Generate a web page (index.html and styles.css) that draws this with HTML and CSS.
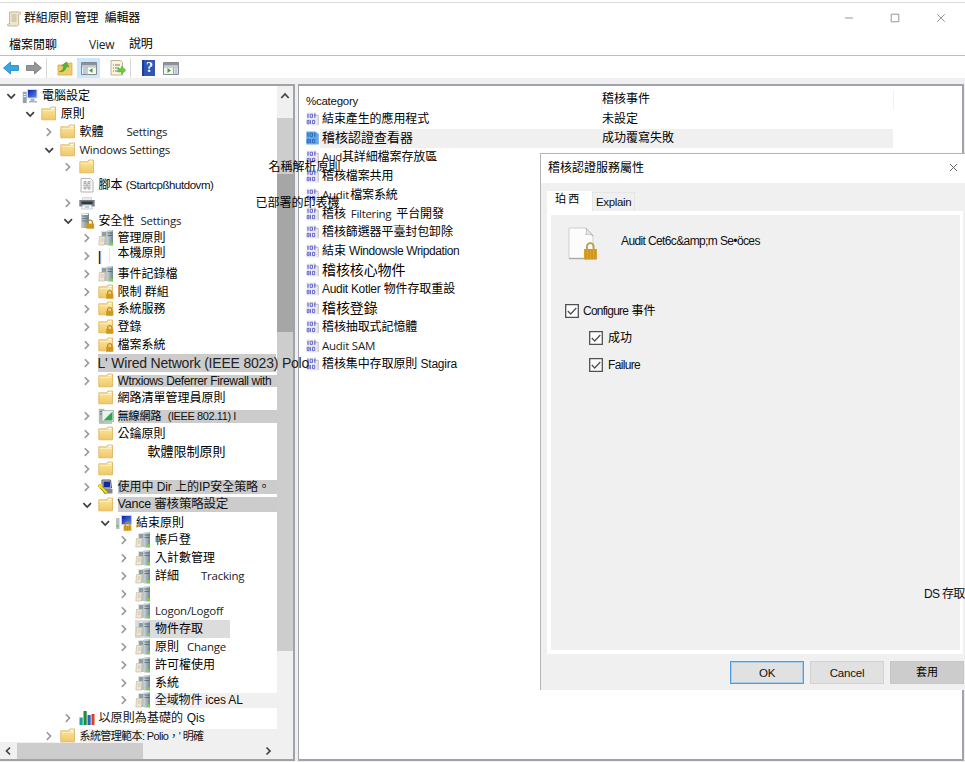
FILE: index.html
```
<!DOCTYPE html>
<html lang="zh-Hant">
<head>
<meta charset="utf-8">
<title>群組原則管理編輯器</title>
<link rel="stylesheet" href="styles.css">
</head>
<body>
<svg class="defs" aria-hidden="true">
  <linearGradient id="gf" x1="0" y1="0" x2="0" y2="1"><stop offset="0" stop-color="#fbe7a4"/><stop offset="1" stop-color="#f0c865"/></linearGradient>
  <linearGradient id="gs" x1="0" y1="0" x2="1" y2="0"><stop offset="0" stop-color="#c9d3d8"/><stop offset="1" stop-color="#71858f"/></linearGradient>
  <linearGradient id="gb" x1="0" y1="0" x2="1" y2="1"><stop offset="0" stop-color="#0a1fb0"/><stop offset="1" stop-color="#5b8cf0"/></linearGradient>
  <symbol id="right" viewBox="0 0 22 16"><path d="M8.800 4.300l3.800 3.800-3.800 3.800" fill="none" stroke="#9a9a9a" stroke-width="1.600"/></symbol>
  <symbol id="down" viewBox="0 0 22 16"><path d="M7.400 6.200l3.800 3.800 3.800-3.800" fill="none" stroke="#3c3c3c" stroke-width="1.700"/></symbol>
  <symbol id="folder" viewBox="0 0 16 16"><path d="M.8 2.800h8l1-1.800h4.700v12.800H.8z" fill="url(#gf)" stroke="#dcb158" stroke-width=".8"/><path d="M10.300 2.500h3" stroke="#fff" stroke-width="1.300"/><path d="M1.500 4.500h12.500" stroke="#fdf0c0" stroke-width=".8"/></symbol>
  <symbol id="lock" viewBox="0 0 8 9"><path d="M2 4.500V3a2 2 0 0 1 4 0v1.500" fill="none" stroke="#b58c30" stroke-width="1.200"/><path d="M.5 4h7v4.800h-7z" fill="#d99f22"/><path d="M2 4.500v4M4 4.500v4M6 4.500v4" stroke="#b37e14" stroke-width=".4"/></symbol>
  <symbol id="flock" viewBox="0 0 16 16"><use href="#folder"/><use href="#lock" x="7.500" y="5.500" width="8.500" height="9.500"/></symbol>
  <symbol id="tower" viewBox="0 0 16 16"><path d="M2 .5h8V15H2z" fill="url(#gs)"/><path d="M3 3h6M3 5.500h6M3 8h6" stroke="#5c7078" stroke-width=".8"/><path d="M3 1.500h6" stroke="#f2f6f8" stroke-width="1"/></symbol>
  <symbol id="security" viewBox="0 0 16 16"><use href="#tower"/><use href="#lock" x="6.500" y="6" width="9.500" height="10"/></symbol>
  <symbol id="server" viewBox="0 0 16 16"><path d="M3.500 1h5.500v14H3.500z" fill="#b9c5ca"/><path d="M9 .3h6V15.500H9z" fill="url(#gs)"/><path d="M4 1.500h4M9.500 1h5" stroke="#e8eef0" stroke-width=".8"/><path d="M4 3h4M4 5h4M9.500 3h5M9.500 5.500h5" stroke="#4f656e" stroke-width=".8"/><path d="M1.500 6.500h5.500l-.6 8.500H.8z" fill="#eee6d2" stroke="#c0b497" stroke-width=".6"/><path d="M2.700 9h3M2.600 11h3" stroke="#b9ad93" stroke-width=".6"/><circle cx="13.500" cy="13.500" r="1.600" fill="#6ede2b"/></symbol>
  <symbol id="pc" viewBox="0 0 16 16"><path d="M5 1h10.500v9.500H5z" fill="#d4d9e4"/><path d="M6 2h8.500v7.500H6z" fill="url(#gb)"/><path d="M8.500 10.500h4v2.500h2.500v1.500H7V13h1.500z" fill="#aeb3bb"/><path d="M.8 3.800h3.900v11.300H.8z" fill="#8fa3b4"/><path d="M1.500 6.500h2.500M1.500 8.500h2.500" stroke="#e3ecf3"/></symbol>
  <symbol id="pclock" viewBox="0 0 16 16"><path d="M5 0h11v10H5z" fill="#c8cdda"/><path d="M6 1h9v8H6z" fill="url(#gb)"/><path d="M0 3h3.500v11H0z" fill="#b9bec0"/><circle cx="1.700" cy="11" r="1" fill="#58c13b"/><use href="#lock" x="7" y="6" width="9" height="10"/></symbol>
  <symbol id="script" viewBox="0 0 16 16"><path d="M2 1.500h9.500L14 4v11H2z" fill="#fafafa" stroke="#b4b4b4"/><path d="M5 4.500h2v2H5zM9 4.500h2v2H9zM5 10h2v2H5zM9 10h2v2H9zM4 8.200h8M8 6.500v4" fill="none" stroke="#a2a2a2" stroke-width=".9"/></symbol>
  <symbol id="printer" viewBox="0 0 16 16"><path d="M3.500 2.500h9V6h-9z" fill="#e8eaec" stroke="#bbb" stroke-width=".5"/><path d="M.3 5h15.400v6.500H.3z" fill="#777e84"/><path d="M2.500 6.500h11v2.500h-11z" fill="#33383c"/><path d="M3.500 10h9l1 4h-11z" fill="#f3f5f6" stroke="#aaa" stroke-width=".5"/><path d="M6 12h4" stroke="#71b4c8"/></symbol>
  <symbol id="blank" viewBox="0 0 16 16"><path d="M1.700 3v13" stroke="#000" stroke-width="1.200"/><path d="M.7 3v13" stroke="#f5b65f" stroke-width=".7"/><path d="M2.700 3v13" stroke="#62b2ef" stroke-width=".7"/><path d="M11.500 0v14" stroke="#dedede" stroke-width=".8"/></symbol>
  <symbol id="wireless" viewBox="0 0 16 16"><path d="M.8.800h5.500v13.500H.8z" fill="#aebbb9"/><path d="M2 3.500h3M2 6h3" stroke="#5d6e6b"/><path d="M4 2.500h11.500v11H4z" fill="#e9f1ea" stroke="#93aaa0" stroke-width=".7"/><path d="M5.500 12.500L14.500 3.500v9z" fill="#35a154"/><path d="M1 15h13" stroke="#7c9188"/></symbol>
  <symbol id="ipsec" viewBox="0 0 16 16"><path d="M4 1h8.500l1 8H4z" fill="#c9ccd2" stroke="#55585e"/><path d="M5.500 2.500H12V8H5.500z" fill="#1527a4"/><path d="M4 10h10.500v4.500H6z" fill="#82868d"/><path d="M.8 6l8 8" stroke="#8a7c00" stroke-width="3.200"/><path d="M1 6l7.800 8M1 8.500l3-3" stroke="#f5e01c" stroke-width="2.200"/></symbol>
  <symbol id="chart" viewBox="0 0 16 16"><path d="M.5 7.500h3.200v7.500H.5z" fill="#12a49b"/><path d="M4.500 1h3.200V15H4.500z" fill="#258b38"/><path d="M8.500 5h3.200v10H8.500z" fill="#2864c4"/><path d="M12.500 4h3v11h-3z" fill="#dd3f20"/></symbol>
  <symbol id="policy" viewBox="0 0 13 14"><path d="M.5.5h8.500l3.500 2.500v10.500H.5z" fill="#e9e9ec"/><path d="M9 .5v3h3.300v9.500" fill="none" stroke="#bdbdc2" stroke-width=".9"/><path d="M2 1.800v4M8.800 1.800v4M4.300 8v4" stroke="#5b5bc9" stroke-width="1.100"/><path d="M4.200 2.200h2.300v3.200H4.200zM1.200 8.400h1.700v3.200H1.200zM6.500 8.400h2.200v3.200H6.500z" fill="none" stroke="#5b5bc9" stroke-width=".9"/></symbol>
  <symbol id="policysel" viewBox="0 0 13 14"><path d="M.3.500h9l3.500 2.500v10.500H.3z" fill="#63a9e4"/><path d="M2 1.800v4M8.800 1.800v4M4.300 8v4" stroke="#2a62ba" stroke-width="1.100"/><path d="M4.200 2.200h2.300v3.200H4.200zM1.200 8.400h1.700v3.200H1.200zM6.500 8.400h2.200v3.200H6.500z" fill="none" stroke="#2a62ba" stroke-width=".9"/></symbol>
</svg>

<header class="titlebar">
  <svg class="app-icon" viewBox="0 0 16 16"><path d="M3.500 1h10.300c1.200 0 1.200 2.500-.3 2.500h-.8V13c0 1.500-1 2-2 2H2.500c-1.500 0-1.500-2 0-2h1z" fill="#efe6cb" stroke="#b5a988" stroke-width=".8"/><path d="M5.500 4h5M5.500 6h5M5.500 8h5M5.500 10h5" stroke="#a89c81" stroke-width=".7"/></svg>
  <h1>群組原則 管理&nbsp; 編輯器</h1>
  <div class="winbtns">
    <svg viewBox="0 0 10 10"><path d="M1 5h8"/></svg>
    <svg viewBox="0 0 10 10"><path d="M1.200 1.200h7.600v7.600H1.200z"/></svg>
    <svg viewBox="0 0 10 10"><path d="M1.200 1.200l7.600 7.600M8.800 1.200L1.200 8.800"/></svg>
  </div>
</header>
<nav class="menubar"><span class="m1">檔案閒聊</span><span class="m2 en">View</span><span class="m3">說明</span></nav>
<div class="toolbar">
  <svg class="back" viewBox="0 0 16 14"><path d="M.5 7l7-6v3.500h8v5h-8V13z" fill="#36a7e6" stroke="#2182be" stroke-width=".8"/></svg>
  <svg class="fwd" viewBox="0 0 16 14"><path d="M15.500 7l-7-6v3.500h-8v5h8V13z" fill="#969696" stroke="#777" stroke-width=".8"/></svg>
  <i class="sep s1"></i>
  <svg class="up" viewBox="0 0 16 16"><path d="M1 5h6l1-2h7v12H1z" fill="#f1ca6c" stroke="#d7ab4e" stroke-width=".8"/><path d="M2.500 11.500c2.500-.5 4-2.500 4.300-5.500L4.500 5.800 9.500 2l2.500 5-2.500-.5c-.8 4-3.500 6-7 5z" fill="#52b536" stroke="#3b952a" stroke-width=".5"/></svg>
  <span class="tool-on"><svg viewBox="0 0 16 13"><path d="M.5.5h15v12H.5z" fill="#f4f4f4" stroke="#85898f"/><path d="M1 1h14v2.500H1z" fill="#8b939b"/><path d="M1 5h14M6 5v8" stroke="#a1a7ad"/><path d="M2 7h3M2 9h3M2 11h3" stroke="#5792cc" stroke-width=".8"/><path d="M7 5.500h5.500V12H7z" fill="#fff"/><path d="M11.500 6v5L8 8.500z" fill="#38a922"/></svg></span>
  <svg class="export" viewBox="0 0 16 16"><path d="M1 .5h9.500l2 2V15H1z" fill="#fbf4d8" stroke="#aaa58f" stroke-width=".8"/><path d="M3 5h1M5 5h5M3 8h1M5 8h4M3 11h1M5 11h4" stroke="#777"/><path d="M8 8.500h3.500V6l4.300 4.300-4.300 4.200V12H8z" fill="#6acb40" stroke="#45a62a" stroke-width=".5"/></svg>
  <i class="sep s2"></i>
  <span class="help">?</span>
  <svg class="pane-ico" viewBox="0 0 16 13"><path d="M.5.5h15v12H.5z" fill="#f4f4f4" stroke="#85898f"/><path d="M1 1h14v2.500H1z" fill="#8b939b"/><path d="M1 5h14M10.500 5v8" stroke="#a1a7ad"/><path d="M11.500 7h3M11.500 9h3M11.500 11h3" stroke="#5792cc" stroke-width=".8"/><path d="M4.500 6v5L8 8.500z" fill="#38a922"/></svg>
</div>

<main class="panes">
  <section class="tree-pane">
    <div class="tree-top">
      <ul class="tree">
        <li class="l0"><svg class="ch"><use href="#down"/></svg><svg class="ic"><use href="#pc"/></svg><span>電腦設定</span></li>
        <li class="l1"><svg class="ch"><use href="#down"/></svg><svg class="ic"><use href="#folder"/></svg><span>原則</span></li>
        <li class="l2"><svg class="ch"><use href="#right"/></svg><svg class="ic"><use href="#folder"/></svg><span class="fixed47">軟體</span><span class="en">Settings</span></li>
        <li class="l2"><svg class="ch"><use href="#down"/></svg><svg class="ic"><use href="#folder"/></svg><span class="en">Windows Settings</span></li>
        <li class="l3"><svg class="ch"><use href="#right"/></svg><svg class="ic"><use href="#folder"/></svg><span class="far-a">名稱解析原則</span></li>
        <li class="l3"><i class="ch"></i><svg class="ic"><use href="#script"/></svg><span>腳本 <b class="ar startup">(Startcpßhutdovm)</b></span></li>
        <li class="l3"><svg class="ch"><use href="#right"/></svg><svg class="ic"><use href="#printer"/></svg><span class="far-b">已部署的印表機</span></li>
        <li class="l3"><svg class="ch"><use href="#down"/></svg><svg class="ic"><use href="#security"/></svg><span class="fixed42">安全性</span><span class="en">Settings</span></li>
        <li class="l4"><svg class="ch"><use href="#right"/></svg><svg class="ic"><use href="#server"/></svg><span>管理原則</span></li>
        <li class="l4"><svg class="ch"><use href="#right"/></svg><svg class="ic"><use href="#blank"/></svg><span class="raised">本機原則</span></li>
        <li class="l4"><svg class="ch"><use href="#right"/></svg><svg class="ic"><use href="#server"/></svg><span>事件記錄檔</span></li>
        <li class="l4"><svg class="ch"><use href="#right"/></svg><svg class="ic"><use href="#flock"/></svg><span>限制 群組</span></li>
        <li class="l4"><svg class="ch"><use href="#right"/></svg><svg class="ic"><use href="#flock"/></svg><span>系統服務</span></li>
        <li class="l4"><svg class="ch"><use href="#right"/></svg><svg class="ic"><use href="#flock"/></svg><span>登錄</span></li>
        <li class="l4"><svg class="ch"><use href="#right"/></svg><svg class="ic"><use href="#flock"/></svg><span>檔案系統</span></li>
        <li class="l4"><svg class="ch"><use href="#right"/></svg><span class="wired ar">L' Wired Network (IEEE 8023) Polo</span></li>
        <li class="l4"><svg class="ch"><use href="#right"/></svg><svg class="ic"><use href="#folder"/></svg><span class="hl h12 ar firewall">Wtrxiows Deferrer Firewall with</span></li>
        <li class="l4"><i class="ch"></i><svg class="ic"><use href="#folder"/></svg><span>網路清單管理員原則</span></li>
        <li class="l4"><svg class="ch"><use href="#right"/></svg><svg class="ic"><use href="#wireless"/></svg><span class="hl h13 small">無線網路&nbsp; <b class="ar wifi">(IEEE 802.11) I</b></span></li>
        <li class="l4"><svg class="ch"><use href="#right"/></svg><svg class="ic"><use href="#folder"/></svg><span>公鑰原則</span></li>
        <li class="l4"><svg class="ch"><use href="#right"/></svg><svg class="ic"><use href="#folder"/></svg><span class="pushed">軟體限制原則</span></li>
        <li class="l4"><svg class="ch"><use href="#right"/></svg><svg class="ic"><use href="#folder"/></svg></li>
        <li class="l4"><svg class="ch"><use href="#right"/></svg><svg class="ic"><use href="#ipsec"/></svg><span class="hl h14 ar ip">使用中 Dir 上的IP安全策略。</span></li>
        <li class="l4"><svg class="ch"><use href="#down"/></svg><svg class="ic"><use href="#folder"/></svg><span class="hl h15 ar vance">Vance 審核策略設定</span></li>
        <li class="l5"><svg class="ch"><use href="#down"/></svg><svg class="ic"><use href="#pclock"/></svg><span>結束原則</span></li>
        <li class="l6"><svg class="ch"><use href="#right"/></svg><svg class="ic"><use href="#server"/></svg><span>帳戶登</span></li>
        <li class="l6"><svg class="ch"><use href="#right"/></svg><svg class="ic"><use href="#server"/></svg><span>入計數管理</span></li>
        <li class="l6"><svg class="ch"><use href="#right"/></svg><svg class="ic"><use href="#server"/></svg><span class="fixed46">詳細</span><span class="en">Tracking</span></li>
        <li class="l6"><svg class="ch"><use href="#right"/></svg><svg class="ic"><use href="#server"/></svg></li>
        <li class="l6"><svg class="ch"><use href="#right"/></svg><svg class="ic"><use href="#server"/></svg><span class="en">Logon/Logoff</span></li>
        <li class="l6"><svg class="ch"><use href="#right"/></svg><span class="current"><svg class="ic"><use href="#server"/></svg><span>物件存取</span></span></li>
        <li class="l6"><svg class="ch"><use href="#right"/></svg><svg class="ic"><use href="#server"/></svg><span class="fixed32">原則</span><span class="en">Change</span></li>
        <li class="l6"><svg class="ch"><use href="#right"/></svg><svg class="ic"><use href="#server"/></svg><span>許可權使用</span></li>
        <li class="l6"><svg class="ch"><use href="#right"/></svg><svg class="ic"><use href="#server"/></svg><span>系統</span></li>
        <li class="l6"><svg class="ch"><use href="#right"/></svg><svg class="ic"><use href="#server"/></svg><span class="hl pale h15 ar">全域物件 ices AL</span></li>
        <li class="l3"><svg class="ch"><use href="#right"/></svg><svg class="ic"><use href="#chart"/></svg><span class="ar qos">以原則為基礎的 Qis</span></li>
        <li class="l2"><svg class="ch"><use href="#right"/></svg><svg class="ic"><use href="#folder"/></svg><span class="hl pale h14 small tmpl ar">系統管理範本: Polio，' 明確</span></li>
      </ul>
      <div class="vscroll"><svg viewBox="0 0 16 32"><path d="M4.300 12l3.700-4 3.700 4" fill="none" stroke="#444" stroke-width="1.800"/></svg><i class="v1"></i><i class="v2"></i><i class="v3"></i></div>
    </div>
    <div class="hscroll"><svg viewBox="0 0 16 16"><path d="M10 4.500L6.500 8l3.500 3.500"/></svg><i></i><svg class="hr" viewBox="0 0 16 16"><path d="M6.500 4.500L10 8l-3.500 3.500"/></svg></div>
  </section>

  <section class="list-pane">
    <div class="list-head"><span class="c1 ar">%category</span><span class="c2">稽核事件</span></div>
    <ul class="list">
      <li><svg><use href="#policy"/></svg><span class="c1">結束產生的應用程式</span><span class="c2">未設定</span></li>
      <li class="sel"><svg><use href="#policysel"/></svg><span class="c1 big13">稽核認證查看器</span><span class="c2">成功覆寫失敗</span></li>
      <li><svg><use href="#policy"/></svg><span class="c1"><b class="en aud">Aud</b>其詳細檔案存放區</span></li>
      <li><svg><use href="#policy"/></svg><span class="c1">稽核檔案共用</span></li>
      <li><svg><use href="#policy"/></svg><span class="c1"><b class="en audit">Audit</b>檔案系統</span></li>
      <li><svg><use href="#policy"/></svg><span class="c1">稽核<b class="en filt">Filtering</b>平台開發</span></li>
      <li><svg><use href="#policy"/></svg><span class="c1">稽核篩選器平臺封包卸除</span></li>
      <li><svg><use href="#policy"/></svg><span class="c1">結束 <b class="ar win">Windowsle Wripdation</b></span></li>
      <li><svg><use href="#policy"/></svg><span class="c1 big14">稽核核心物件</span></li>
      <li><svg><use href="#policy"/></svg><span class="c1"><b class="ar kot">Audit Kotler</b> 物件存取重設</span></li>
      <li><svg><use href="#policy"/></svg><span class="c1 big14">稽核登錄</span></li>
      <li><svg><use href="#policy"/></svg><span class="c1">稽核抽取式記憶體</span></li>
      <li><svg><use href="#policy"/></svg><span class="c1 en">Audit SAM</span></li>
      <li><svg><use href="#policy"/></svg><span class="c1">稽核集中存取原則 <b class="ar stag">Stagira</b></span></li>
    </ul>
  </section>
</main>

<section class="dialog" role="dialog">
  <header><h2>稽核認證服務屬性</h2><svg viewBox="0 0 10 10"><path d="M1 1l8 8M9 1L1 9"/></svg></header>
  <div class="tabs"><span class="tab on">珀 西</span><span class="tab ar">Explain</span></div>
  <div class="page">
    <div class="subject">
      <svg viewBox="0 0 30 34"><path d="M1 1h17l7 7v23.500H1z" fill="#fcfcfc" stroke="#cfcfcf"/><path d="M1 31.500h24" stroke="#a8a8a8" stroke-width="1.400"/><path d="M18 1c.8 3 .8 5-.3 6.500 3-.5 5-.3 7.300 1.500z" fill="#e9e9e9" stroke="#b5b5b5" stroke-width=".8"/><path d="M19 23v-3.500a3.300 3.300 0 0 1 6.600 0V23" fill="none" stroke="#c0993c" stroke-width="1.800"/><path d="M16 22h13v10.500H16z" fill="#dca52a"/><path d="M18 22v10.500M21 22v10.500M24 22v10.500M27 22v10.500" stroke="#bd8718" stroke-width=".8"/></svg>
      <span class="ar cert">Audit Cet6c&amp;amp;m Se•öces</span>
    </div>
    <div class="check"><svg viewBox="0 0 14 14"><path class="bx" d="M.7.700h12.600v12.600H.7z"/><path d="M2.800 7l2.900 3L11.300 4"/></svg><span><b class="ar conf">Configure</b> 事件</span></div>
    <div class="check sub"><svg viewBox="0 0 14 14"><path class="bx" d="M.7.700h12.600v12.600H.7z"/><path d="M2.800 7l2.900 3L11.300 4"/></svg><span>成功</span></div>
    <div class="check sub"><svg viewBox="0 0 14 14"><path class="bx" d="M.7.700h12.600v12.600H.7z"/><path d="M2.800 7l2.900 3L11.300 4"/></svg><span class="ar fail">Failure</span></div>
    <div class="ds ar">DS 存取</div>
  </div>
  <footer><button class="ok ar">OK</button><button class="ar">Cancel</button><button class="apply">套用</button></footer>
</section>
</body>
</html>
```
FILE: styles.css
```
* { box-sizing: border-box; }
body {
  margin: 0; width: 965px; height: 762px; overflow: hidden;
  display: flex; flex-direction: column;
  background: #f0f0f0; color: #000;
  font: 12px/16px "Liberation Sans", "Noto Sans CJK TC", sans-serif;
  position: relative;
}
h1, h2, ul { margin: 0; padding: 0; font-weight: normal; list-style: none; }
b { font-weight: normal; }
svg { flex: none; display: block; }
.defs { position: absolute; width: 0; height: 0; }
.en { font-family: "Open Sans", sans-serif; font-size: 11.5px; letter-spacing: -0.25px; color: #222; }
.ar { font-family: "Liberation Sans", "Noto Sans CJK TC", sans-serif; letter-spacing: -0.2px; color: #111; }

.titlebar { height: 32px; margin-top: 2px; border-top: 1px solid #dcdcdc; background: #fff; display: flex; align-items: center; padding-left: 6px; box-shadow: 0 -2px #fff; }
.app-icon { width: 16px; height: 16px; }
.titlebar h1 { font-size: 12px; line-height: 16px; margin: -2px 0 0 2px; flex: 1; white-space: nowrap; letter-spacing: -0.15px; }
.winbtns { display: flex; gap: 36px; padding: 0 19px 2px 0; }
.winbtns svg { width: 10px; height: 10px; fill: none; stroke: #979797; }
.menubar { height: 21px; flex: none; background: #fff; display: flex; align-items: center; padding-left: 9px; white-space: nowrap; }
.m1 { width: 80px; }
.m2 { width: 40px; font-size: 12px; padding-top: 1px; }
.m3 { padding-bottom: 2px; letter-spacing: -0.3px; }
.toolbar { height: 23px; flex: none; background: #fff; border-top: 1px solid #bdbdbd; display: flex; align-items: center; padding-top: 2px; }
.back { width: 16px; height: 14px; margin-left: 3px; }
.fwd { width: 16px; height: 14px; margin-left: 7px; }
.sep { width: 1px; height: 20px; background: #d9d9d9; }
.s1 { margin-left: 4px; }
.up { width: 16px; height: 16px; margin-left: 10px; }
.tool-on { width: 23px; height: 21px; margin-left: 4px; background: #cce6fb; display: flex; align-items: center; justify-content: center; }
.tool-on svg, .pane-ico { width: 16px; height: 13px; }
.export { width: 16px; height: 16px; margin-left: 10px; }
.s2 { margin-left: 4px; }
.help { width: 13px; height: 16px; margin-left: 11px; background: #3156b5; border-left: 2px solid #203e8c; color: #fff; font: bold 14px/16px "Liberation Serif", serif; text-align: center; }
.pane-ico { margin-left: 8px; }

.panes { flex: 1; display: flex; gap: 3px; padding: 6px 0 1px; min-height: 0; background: #f0f0f0; }
.tree-pane { width: 295px; flex: none; display: flex; flex-direction: column; border-top: 2px solid #a0a2a8; border-right: 2px solid #a0a2ac; border-bottom: 2px solid #a0a2a8; background: #fff; position: relative; z-index: 1; }
.tree-top { flex: 1; display: flex; min-height: 0; }
.tree { width: 277px; padding-top: 1.400px; position: relative; z-index: 2; }
.tree li { height: 17.78px; display: flex; align-items: center; white-space: nowrap; }
.tree .ch { width: 22px; height: 16px; flex: none; }
.tree .ic { width: 16px; height: 16px; margin-right: 4px; }
.tree span { flex: none; }
.l1 { padding-left: 18.7px; }
.l2 { padding-left: 37.5px; }
.l3 { padding-left: 56.5px; }
.l4 { padding-left: 75.5px; }
.l5 { padding-left: 94px; }
.l6 { padding-left: 113px; }
.fixed47 { width: 47px; }
.fixed46 { width: 46px; }
.fixed42 { width: 42px; }
.fixed32 { width: 32px; }
.far-a { margin-left: 170px; }
.far-b { margin-left: 157px; }
.pushed { margin-left: 30px; font-size: 13px; }
.raised { margin-top: -6px; }
.startup { font-size: 11.5px; letter-spacing: -0.45px; }
.tree .hl { flex: 1; background: #cccccc; min-width: 0; }
.tree .hl.pale { background: #f0f0f0; }
.h12 { height: 12px; line-height: 12px; }
.h13 { height: 13px; line-height: 13px; }
.h14 { height: 14px; line-height: 14px; }
.h15 { height: 15px; line-height: 15px; }
.small { font-size: 11px; }
.firewall { letter-spacing: -0.37px; margin-top: 1px; }
.wifi { letter-spacing: -0.4px; }
.ip { letter-spacing: -0.05px; }
.vance { font-size: 12.500px; letter-spacing: -0.2px; }
.qos { letter-spacing: 0.1px; }
.tmpl { letter-spacing: -0.6px; }
.tree .wired { width: 178px; height: 18px; background: #cccccc; font-size: 14px; line-height: 18px; letter-spacing: -0.2px; color: #222; }
.current { display: flex; align-items: center; height: 18px; width: 95px; background: #dcdcdc; }

.vscroll { width: 16px; display: flex; flex-direction: column; background: #f0f0f0; }
.vscroll svg { width: 16px; height: 32px; }
.v1 { height: 56px; background: #cdcdcd; }
.v2 { height: 158px; background: #a6a6a6; }
.v3 { height: 319px; background: #cdcdcd; }
.hscroll { height: 17px; background: #f0f0f0; display: flex; align-items: center; }
.hscroll svg { width: 16px; height: 16px; fill: none; stroke: #444; stroke-width: 1.700; }
.hscroll i { width: 126px; height: 16px; margin-left: 1px; background: #cdcdcd; }
.hscroll .hr { margin-left: 117px; }

.list-pane { flex: 1; background: #fff; border: 2px solid #a0a2ac; border-left-width: 1px; margin-right: 1px; padding-top: 4px; }
.list-head { display: flex; height: 20px; align-items: center; padding-left: 7px; }
.list-head .c1 { width: 295px; font-size: 11.5px; padding-top: 1px; letter-spacing: -0.25px; }
.list-head .c2 { border: solid #f0f0f0; border-width: 0 1px; width: 293px; height: 20px; line-height: 18px; }
.list li { height: 18.85px; display: flex; align-items: center; padding-left: 7px; white-space: nowrap; }
.list svg { width: 13px; height: 14px; margin-right: 3px; }
.list .c1 { width: 280px; letter-spacing: -0.1px; }
.list .c1.big13, .list .c2 { letter-spacing: 0; }
.list .c1.en { letter-spacing: -0.25px; }
.list .sel { background: linear-gradient(#f0f0f0, #f0f0f0) 21px 0 / 573px 100% no-repeat; }
.big13 { font-size: 13px; }
.big14 { font-size: 14px; }
.filt { margin: 0 5px; letter-spacing: -0.3px; }
.aud { letter-spacing: -0.5px; }
.audit { margin-right: 1px; }
.win { letter-spacing: -0.42px; }
.kot { letter-spacing: -0.3px; }

.dialog { position: absolute; z-index: 3; left: 540px; top: 153px; width: 425px; height: 537px; background: #f0f0f0; border-left: 1px solid #b4b4b4; border-top: 1px solid #b4b4b4; display: flex; flex-direction: column; }
.dialog header { height: 29px; background: #fff; display: flex; align-items: center; justify-content: space-between; padding: 0 7px 2px; flex: none; }
.dialog h2 { font-size: 12px; }
.dialog header svg { width: 9px; height: 9px; fill: none; stroke: #555; }
.tabs { display: flex; height: 28px; padding-left: 6px; align-items: flex-end; flex: none; }
.tab { height: 19px; width: 43px; border: 1px solid #e6e6e6; border-bottom: 0; padding-left: 3px; line-height: 18px; font-size: 11.5px; letter-spacing: -0.35px; white-space: nowrap; }
.tab.on { height: 20px; width: 45px; background: #fff; border: 0; padding-left: 8px; line-height: 16px; font-size: 11px; }
.page { height: 443px; margin: 0 2px 0 6px; border: 4px solid #fff; border-right-width: 3px; flex: none; }
.subject { display: flex; align-items: center; padding: 11px 0 0 17px; height: 45px; gap: 23px; margin-bottom: 37px; }
.subject svg { width: 30px; height: 34px; margin-top: 2px; }
.cert { letter-spacing: -0.62px; margin-top: -5px; }
.check { display: flex; align-items: center; height: 27px; margin-top: 0; padding-left: 14px; gap: 4px; }
.check.sub { padding-left: 38px; gap: 5px; }
.check svg { width: 14px; height: 14px; fill: none; stroke: #505050; stroke-width: 1.300; }
.check .bx { fill: #fff; }
.conf { letter-spacing: -0.75px; }
.check .fail { letter-spacing: -0.65px; }
.ds { margin-top: 208px; margin-left: 373px; white-space: nowrap; letter-spacing: -0.7px; }
.dialog footer { display: flex; justify-content: flex-end; gap: 6px; padding: 7px 1px 0 0; }
.dialog button { width: 74px; height: 23px; padding: 0; border: 1px solid #d2d2d2; background: #e1e1e1; font-size: 11.5px; }
.dialog .ok { border: 1px solid #4a9ee0; box-shadow: inset 0 0 0 1px #a9cdea; }
.dialog .apply { background: #cccccc; border-color: #c6c6c6; font-family: "Noto Sans CJK TC", sans-serif; font-size: 11px; line-height: 16px; padding-bottom: 3px; }
```
